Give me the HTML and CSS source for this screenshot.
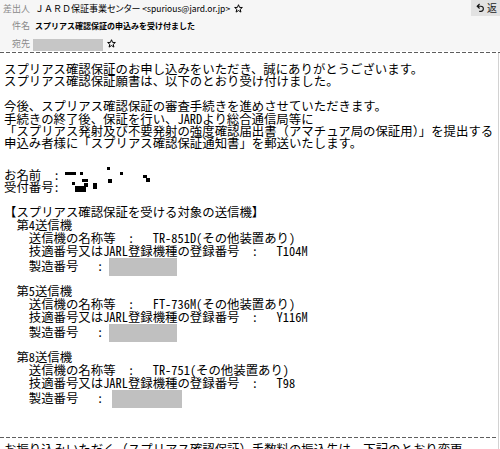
FILE: index.html
```html
<!DOCTYPE html>
<html lang="ja">
<head>
<meta charset="utf-8">
<title>スプリアス確認保証の申込みを受け付ました</title>
<link rel="stylesheet" href="styles.css">
</head>
<body>
<header class="hdr">
  <div class="row r1">
    <span class="lbl">差出人</span>
    <span class="val"><span class="fw">ＪＡＲＤ</span>保証事業センター</span>
    <span class="addr">&lt;spurious@jard.or.jp&gt;</span>
    <svg class="star" viewBox="0 0 10 10"><path d="M5 .8 6.2 3.8 9.3 3.9 6.9 5.9 7.7 9 5 7.3 2.3 9 3.1 5.9.7 3.9 3.8 3.8Z"/></svg>
  </div>
  <div class="row r2">
    <span class="lbl">件名</span>
    <span class="val subj">スプリアス確認保証の申込みを受け付ました</span>
  </div>
  <div class="row r3">
    <span class="lbl">宛先</span>
    <span class="mask"></span>
    <svg class="star" viewBox="0 0 10 10"><path d="M5 .8 6.2 3.8 9.3 3.9 6.9 5.9 7.7 9 5 7.3 2.3 9 3.1 5.9.7 3.9 3.8 3.8Z"/></svg>
  </div>
  <div class="reply">
    <svg class="reply-ic" viewBox="0 0 10 12"><path d="M4.5 1 1.5 3.8 4.5 6.6M1.8 3.8H6a3.2 3.2 0 0 1 0 6.4H4"/></svg>
    <span>返</span>
  </div>
</header>
<div class="rule"></div>
<main class="mail">
  <section class="g g1">
    <div class="ln">スプリアス確認保証のお申し込みをいただき、誠にありがとうございます。</div>
    <div class="ln">スプリアス確認保証願書は、以下のとおり受け付けました。</div>
  </section>
  <section class="g g2">
    <div class="ln">今後、スプリアス確認保証の審査手続きを進めさせていただきます。</div>
    <div class="ln">手続きの終了後、保証を行い、<span class="h">JARD</span>より総合通信局等に</div>
    <div class="ln">「スプリアス発射及び不要発射の強度確認届出書（アマチュア局の保証用）」を提出する</div>
    <div class="ln">申込み者様に「スプリアス確認保証通知書」を郵送いたします。</div>
  </section>
  <section class="g g3">
    <div class="ln">お名前<span class="h">  :</span></div>
    <div class="ln">受付番号<span class="h">:</span></div>
    <svg class="redact" viewBox="0 0 95 32" width="95" height="32">
      <rect x="5" y="8" width="11" height="3"/>
      <rect x="20" y="8" width="3" height="3"/>
      <rect x="47" y="3" width="3" height="3"/>
      <rect x="60" y="8" width="3" height="3"/>
      <rect x="83" y="11" width="4" height="3"/>
      <rect x="86" y="14" width="4" height="4"/>
      <rect x="12" y="18" width="3" height="3"/>
      <rect x="22" y="15" width="6" height="3"/>
      <rect x="24" y="19" width="4" height="4"/>
      <rect x="15" y="22" width="11" height="6"/>
      <rect x="33" y="19" width="4" height="6"/>
      <rect x="48" y="15" width="4" height="4"/>
    </svg>
  </section>
  <section class="g eq g4">
    <div class="ln">【スプリアス確認保証を受ける対象の送信機】</div>
    <div class="ln i1">第<span class="h">4</span>送信機</div>
    <div class="ln i2">送信機の名称等<span class="h">  :   TR-851D(</span>その他装置あり<span class="h">)</span></div>
    <div class="ln i2">技適番号又は<span class="h">JARL</span>登録機種の登録番号<span class="h">  :   T104M</span></div>
    <div class="ln i2">製造番号<span class="h">   : </span><span class="blank"></span></div>
  </section>
  <section class="g eq g5">
    <div class="ln i1">第<span class="h">5</span>送信機</div>
    <div class="ln i2">送信機の名称等<span class="h">  :   FT-736M(</span>その他装置あり<span class="h">)</span></div>
    <div class="ln i2">技適番号又は<span class="h">JARL</span>登録機種の登録番号<span class="h">  :   Y116M</span></div>
    <div class="ln i2">製造番号<span class="h">   : </span><span class="blank"></span></div>
  </section>
  <section class="g eq g6">
    <div class="ln i1">第<span class="h">8</span>送信機</div>
    <div class="ln i2">送信機の名称等<span class="h">  :   TR-751(</span>その他装置あり<span class="h">)</span></div>
    <div class="ln i2">技適番号又は<span class="h">JARL</span>登録機種の登録番号<span class="h">  :   T98</span></div>
    <div class="ln i2">製造番号<span class="h">   : </span><span class="blank wide"></span></div>
  </section>
  <div class="rule rule-body"></div>
  <div class="ln tail">お振り込みいただく（スプリアス確認保証）手数料の振込先は、下記のとおり変更</div>
</main>
</body>
</html>
```

FILE: styles.css
```css
* {
  margin: 0;
  padding: 0;
  box-sizing: border-box;
}

html,
body {
  width: 500px;
  height: 449px;
  overflow: hidden;
}

body {
  background: #fff;
  color: #000;
  font-family: "Noto Sans CJK JP", "Noto Sans", sans-serif;
}

/* ---------- header ---------- */
.hdr {
  position: relative;
  height: 51px;
  background: #f6f6f6;
  font-size: 9px;
  line-height: 1;
}

.row {
  display: flex;
  align-items: center;
  white-space: nowrap;
}

.r1 { height: 16px; }
.r2 { height: 19px; }
.r3 { height: 16px; }

.lbl {
  flex: none;
  width: 30px;
  text-align: right;
  color: #8a8a8a;
}

.val {
  margin-left: 5px;
  font-feature-settings: "palt";
}

.fw {
  font-feature-settings: normal;
}

.subj {
  font-size: 8px;
  font-weight: 700;
  font-feature-settings: normal;
}

.addr {
  margin-left: 2px;
  font-size: 8.5px;
}

.star {
  flex: none;
  width: 9px;
  height: 9px;
  margin-left: 4px;
  fill: none;
  stroke: #000;
  stroke-width: 1.1;
  stroke-linejoin: round;
}

.mask {
  flex: none;
  align-self: flex-end;
  width: 70px;
  height: 12px;
  margin-left: 3px;
  background: #c6c6c6;
}

.reply {
  position: absolute;
  top: 0;
  right: 0;
  width: 29px;
  height: 16px;
  display: flex;
  align-items: center;
  gap: 3px;
  padding-left: 5px;
  background: #e2e2e2;
  font-size: 10px;
  color: #222;
  overflow: hidden;
}

.reply-ic {
  flex: none;
  width: 8px;
  height: 10px;
  fill: none;
  stroke: #111;
  stroke-width: 1.4;
}

/* ---------- dashed separators ---------- */
.rule {
  height: 1px;
  margin-top: 1px;
  background: repeating-linear-gradient(90deg, #5e5e5e 0 4px, transparent 4px 6px);
}

/* ---------- body ---------- */
.mail {
  position: relative;
  width: 499px;
  height: 396px;
  padding: 10px 0 0 4px;
  border-right: 1px solid #d2d2d2;
  font-size: 12.4px;
  overflow: hidden;
}

.ln {
  height: 12.4px;
  line-height: 12.4px;
  white-space: pre;
}

.eq .ln {
  height: 13px;
  line-height: 13px;
}

.h {
  font-feature-settings: "hwid";
}

.i1 { padding-left: 12.4px; }
.i2 { padding-left: 24.8px; }

.g2 { margin-top: 12.4px; }
.g3 { margin-top: 19px; position: relative; }
.g4 { margin-top: 12.4px; }
.g5 { margin-top: 14px; }
.g6 { margin-top: 14px; }

.redact {
  position: absolute;
  left: 56px;
  top: -5px;
}

.blank {
  display: inline-block;
  width: 68px;
  height: 18px;
  vertical-align: -5px;
  background: #c0c0c0;
}

.blank.wide {
  width: 70px;
  margin-left: 3px;
}

.rule-body {
  margin: 34px 0 0 -4px;
}

.tail {
  margin-top: 5px;
}
```
